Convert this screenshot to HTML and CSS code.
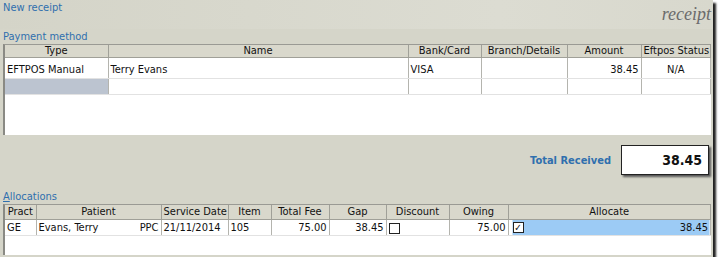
FILE: index.html
```html
<!DOCTYPE html>
<html lang="en">
<head>
    <meta charset="UTF-8">
    <title>New receipt</title>
    <link rel="stylesheet" href="styles.css">
</head>
<body>
    <div class="window">
        <div class="top">
            <div class="caption">New receipt</div>
            <div class="brand">receipt</div>
        </div>

        <div class="section-title">Payment method</div>
        <div class="grid-box payments">
            <table class="grid">
                <colgroup>
                    <col style="width:103px"><col style="width:300px"><col style="width:73px">
                    <col style="width:86px"><col style="width:74px"><col>
                </colgroup>
                <tr>
                    <th>Type</th><th>Name</th><th>Bank/Card</th><th>Branch/Details</th><th>Amount</th><th>Eftpos Status</th>
                </tr>
                <tr class="first">
                    <td>EFTPOS Manual</td><td>Terry Evans</td><td>VISA</td><td></td><td class="num">38.45</td><td class="center">N/A</td>
                </tr>
                <tr class="blank">
                    <td class="picked"></td><td></td><td></td><td></td><td></td><td></td>
                </tr>
            </table>
        </div>

        <div class="total-row">
            <span class="total-label">Total Received</span>
            <div class="total-box">38.45</div>
        </div>

        <div class="section-title alloc-title"><u>A</u>llocations</div>
        <div class="grid-box allocations">
            <table class="grid">
                <colgroup>
                    <col style="width:31px"><col style="width:125px"><col style="width:67px"><col style="width:43px">
                    <col style="width:58px"><col style="width:57px"><col style="width:63px"><col style="width:59px"><col>
                </colgroup>
                <tr class="tall-head">
                    <th>Pract</th><th>Patient</th><th>Service Date</th><th>Item</th><th>Total Fee</th><th>Gap</th><th>Discount</th><th>Owing</th><th>Allocate</th>
                </tr>
                <tr>
                    <td>GE</td>
                    <td><span class="patient"><span>Evans, Terry</span><span>PPC</span></span></td>
                    <td>21/11/2014</td>
                    <td>105</td>
                    <td class="num">75.00</td>
                    <td class="num">38.45</td>
                    <td><span class="check"></span></td>
                    <td class="num">75.00</td>
                    <td class="alloc"><span class="alloc-cell"><span class="check ticked">&#10003;</span><span>38.45</span></span></td>
                </tr>
            </table>
        </div>
    </div>
</body>
</html>
```

FILE: styles.css
```css
body {
    margin: 0;
    background: #ffffff;
    font-family: Tahoma, "DejaVu Sans Condensed", "Liberation Sans", sans-serif;
    font-size: 11px;
    color: #111;
}
.window {
    width: 713px;
    height: 257px;
    background: #d5d5c9;
    box-shadow: 3px 3px 2px #222;
    box-sizing: border-box;
    padding: 0 2px 0 3px;
}
.top {
    height: 29px;
    display: flex;
    justify-content: space-between;
    background: linear-gradient(to right, #d4d4c8, #dcdcd2 70%, #d8d8cd);
    margin: 0 -2px 0 -3px;
    padding: 0 2px 0 3px;
}
.caption {
    color: #2f6fae;
    padding-top: 1px;
}
.brand {
    font-family: "Liberation Serif", serif;
    font-style: italic;
    font-size: 18px;
    color: #6b6b6b;
    padding-top: 4px;
}
.section-title {
    color: #2f6fae;
    height: 15px;
    line-height: 15px;
}
.grid-box {
    background: #fff;
    border-left: 2px solid #8a8a84;
    border-top: 1px solid #9a9a94;
}
.payments {
    height: 90px;
}
.grid {
    border-collapse: collapse;
    table-layout: fixed;
    width: 100%;
}
.grid th {
    background: #d9d8cc;
    font-weight: normal;
    height: 12px;
    line-height: 12px;
    padding: 0 2px;
    border-right: 1px solid #a0a098;
    border-bottom: 1px solid #a0a098;
    white-space: nowrap;
    overflow: hidden;
}
.grid .tall-head th {
    height: 14px;
    line-height: 14px;
}
.grid td {
    height: 15px;
    line-height: 15px;
    padding: 0 2px;
    border-right: 1px solid #b4b4ae;
    border-bottom: 1px solid #e2e2e2;
    white-space: nowrap;
    overflow: hidden;
}
.grid .first td {
    height: 20px;
    line-height: 16px;
    padding-top: 4px;
    box-sizing: border-box;
}
.grid td.picked {
    background: #bcc4d0;
}
.num {
    text-align: right;
}
.center {
    text-align: center;
}
.total-row {
    display: flex;
    justify-content: flex-end;
    align-items: center;
    gap: 10px;
    height: 54px;
}
.total-label {
    color: #2f6fae;
    font-weight: bold;
    font-size: 11px;
    margin-top: -4px;
}
.total-box {
    width: 80px;
    height: 28px;
    line-height: 28px;
    background: #fff;
    border: 1px solid #222;
    box-shadow: 2px 2px 2px #555;
    text-align: right;
    padding-right: 6px;
    font-weight: bold;
    font-size: 14px;
    margin-right: 2px;
    margin-top: -4px;
}
.alloc-title {
    height: 15px;
    line-height: 16px;
}
.allocations {
    height: 50px;
}
.patient, .alloc-cell {
    display: flex;
    justify-content: space-between;
    align-items: center;
}
.check {
    display: inline-block;
    width: 9px;
    height: 9px;
    border: 1px solid #222;
    vertical-align: middle;
    font-size: 10px;
    line-height: 9px;
    text-align: center;
    background: #fff;
}
.grid td.alloc {
    padding-left: 4px;
    background: linear-gradient(to right, #fff 4px, #9ccbf5 4px);
}
```
